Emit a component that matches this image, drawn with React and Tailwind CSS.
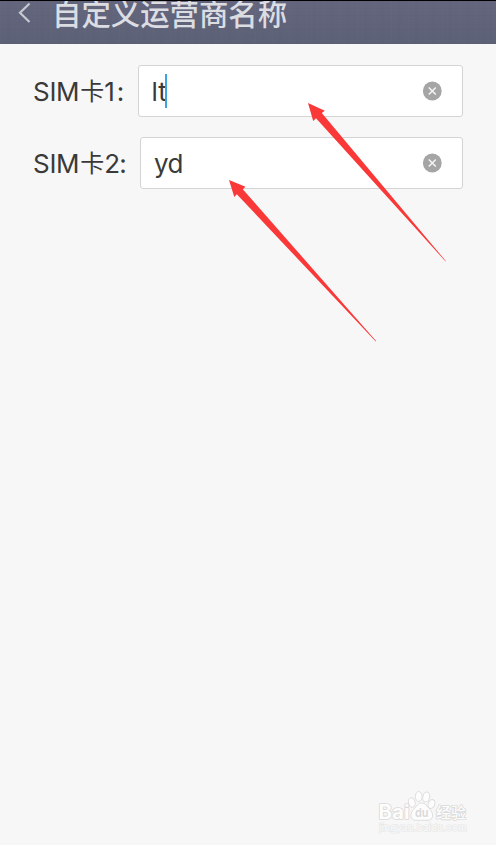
function Label({ digit, gap }) {
  return (
    <div className="flex shrink-0 items-center pt-px whitespace-pre font-['Inter','Noto_Sans_CJK_SC',sans-serif] text-[26px] leading-[52px] font-normal text-[#3a3a3a]">
      <span className="tracking-[-0.3px]">SIM</span>
      <span className="-mt-[4px] ml-px w-[24px] font-['Noto_Sans_CJK_SC',sans-serif] text-[24px] leading-[52px] font-normal">卡</span>
      <span>{digit}</span>
      <span className={gap}>:</span>
    </div>
  );
}

function ClearIcon() {
  return (
    <svg className="mr-px mb-px ml-auto size-[20px]" viewBox="0 0 20 20">
      <circle cx="10.3" cy="10" r="9.4" fill="#a5a5a5" />
      <path d="M6.8 6.5 13.8 13.5M13.8 6.5 6.8 13.5" stroke="#f5f5f5" strokeWidth="1.5" />
    </svg>
  );
}

function Field({ children, className }) {
  return (
    <div className={`flex items-center rounded-[3px] border border-[#d4d4d4] bg-white pr-[19px] font-['Inter',sans-serif] text-[26px] font-normal text-[#3a3a3a] ${className}`}>
      {children}
      <ClearIcon />
    </div>
  );
}

function Watermark() {
  return (
    <svg className="absolute top-[786px] left-[374px] h-[52px] w-[100px]" viewBox="0 0 100 52">
      <g fill="#fdfdfd" stroke="#dddddd" strokeWidth="1">
        <ellipse cx="37.8" cy="16.5" rx="3.3" ry="4.8" transform="rotate(-15 37.8 16.5)" />
        <ellipse cx="44.7" cy="10.5" rx="3.4" ry="5" />
        <ellipse cx="52.2" cy="11" rx="3.4" ry="5" transform="rotate(12 52.2 11)" />
        <ellipse cx="57.5" cy="18" rx="3.2" ry="4.6" transform="rotate(20 57.5 18)" />
        <path d="M47.7 17C51.5 17 52.5 20 56 23.5C60 27.5 59.5 34 54 34.3C50 34.3 45 34.3 41.5 34.3C36 34 35.5 27.5 39.5 23.5C43 20 44 17 47.7 17Z" />
      </g>
      <g fill="#fdfdfd" stroke="#dadada" strokeWidth="1.6" paintOrder="stroke" strokeLinejoin="round">
        <text x="4.5" y="32.7" fontFamily="Inter" fontSize="19.5" fontWeight="700" textLength="31" lengthAdjust="spacingAndGlyphs">Bai</text>
        <text x="62" y="31.5" fontFamily="Noto Sans CJK SC" fontSize="15" fontWeight="500" textLength="30" lengthAdjust="spacingAndGlyphs">经验</text>
      </g>
      <text x="41" y="31" fontFamily="Inter" fontSize="12" fontWeight="600" fill="#d8d8d8" textLength="13.5" lengthAdjust="spacingAndGlyphs">du</text>
      <text x="5" y="44.5" fontFamily="Inter" fontSize="9.5" fontWeight="400" fill="#fafafa" stroke="#e5e5e5" strokeWidth="1" paintOrder="stroke" textLength="88" lengthAdjust="spacingAndGlyphs">jingyan.baidu.com</text>
    </svg>
  );
}

export default function App() {
  return (
    <div className="relative h-[845px] w-[496px] overflow-hidden bg-[#f7f7f7]">
      <header className="relative flex h-[44px] overflow-hidden border-t border-black bg-[#5f6277] bg-[repeating-linear-gradient(90deg,rgba(255,255,255,0.012)_0_1px,transparent_1px_7px,rgba(0,0,0,0.012)_7px_10px,transparent_10px_17px),repeating-linear-gradient(0deg,rgba(0,0,0,0.015)_0_1px,transparent_1px_7px),linear-gradient(#63667d,#5d6176)]">
        <svg className="mt-px ml-[17px] h-[22px] w-[16px] shrink-0" viewBox="0 0 16 22" fill="none">
          <path d="M12.5 1.5 3 10.8 12.5 20" stroke="#c7c8d0" strokeWidth="2.2" />
        </svg>
        <h1 className="-mt-[11px] ml-[19px] h-[44px] font-['Noto_Sans_CJK_SC',sans-serif] text-[29.4px] leading-[44px] font-medium whitespace-nowrap text-[#dcdde3]">自定义运营商名称</h1>
      </header>
      <main className="flex flex-col gap-[20px] pt-[21px] pr-[33px] pl-[33px]">
        <div className="flex h-[52px] justify-between">
          <Label digit="1" gap="ml-[2px]" />
          <Field className="w-[325px] pl-[12.5px]">
            <span className="w-[13.5px]">lt</span>
            <span className="h-[34px] w-[2px] bg-[#3ba3e0]" />
          </Field>
        </div>
        <div className="flex h-[52px] justify-between">
          <Label digit="2" gap="-ml-px" />
          <Field className="w-[323px] pl-[13px]">
            <span className="pt-px tracking-[-0.6px]">yd</span>
          </Field>
        </div>
      </main>
      <svg className="absolute inset-0 h-[845px] w-[496px]" viewBox="0 0 496 845" fill="#fb3838">
        <path d="M308 103 324.8 110.7 321.8 113 446 261.3 445.4 261.3 316 118.3 313.2 121Z" />
        <path d="M229 180 245.5 186.7 242.8 189.2 376.3 341.3 375.5 341.3 236.8 194.2 234.3 197Z" />
      </svg>
      <Watermark />
    </div>
  );
}
